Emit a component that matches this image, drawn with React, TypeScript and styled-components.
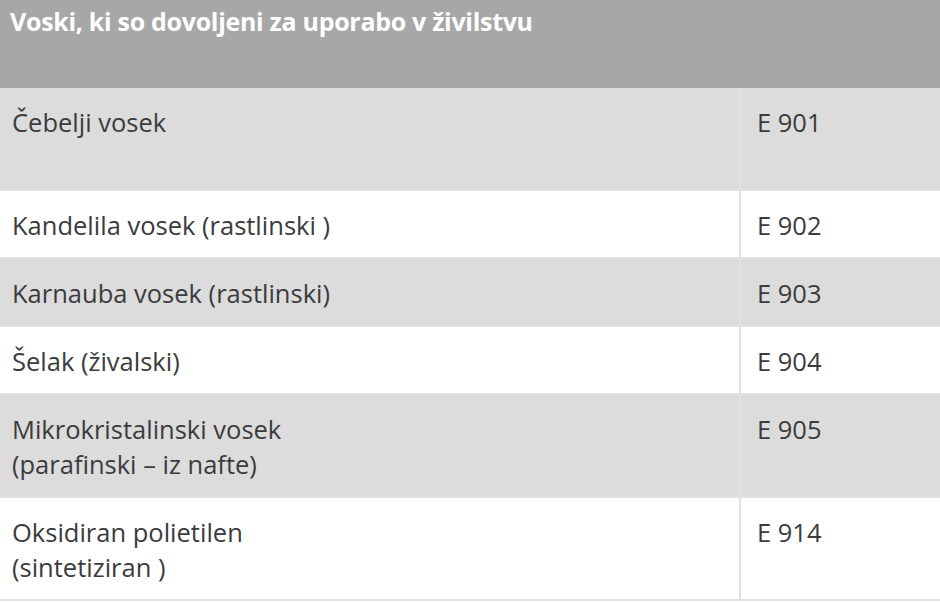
import styled, { createGlobalStyle } from "styled-components";

const GlobalStyle = createGlobalStyle`
  html, body {
    margin: 0;
    padding: 0;
    background: #ffffff;
  }
  body {
    font-family: "Open Sans", "Liberation Sans", sans-serif;
  }
`;

interface WaxRow {
  name: string[];
  code: string;
  tall?: boolean;
}

const rows: WaxRow[] = [
  { name: ["Čebelji vosek"], code: "E 901", tall: true },
  { name: ["Kandelila vosek (rastlinski )"], code: "E 902" },
  { name: ["Karnauba vosek (rastlinski)"], code: "E 903" },
  { name: ["Šelak (živalski)"], code: "E 904" },
  { name: ["Mikrokristalinski vosek", "(parafinski – iz nafte)"], code: "E 905" },
  { name: ["Oksidiran polietilen", "(sintetiziran )"], code: "E 914" },
];

const Table = styled.table`
  width: 940px;
  border-collapse: collapse;
  table-layout: fixed;
  color: #3b3b3e;
  font-size: 25.5px;
  line-height: 35px;
`;

const HeadCell = styled.th`
  height: 88px;
  box-sizing: border-box;
  padding: 4px 10px 0;
  vertical-align: top;
  text-align: left;
  background: #a7a7a7;
  color: #ffffff;
  font-weight: 700;
  font-size: 25px;
  letter-spacing: -0.3px;
`;

const Row = styled.tr<{ $shaded: boolean; $tall?: boolean }>`
  background: ${({ $shaded }) => ($shaded ? "#dcdcdc" : "#ffffff")};
  height: ${({ $tall }) => ($tall ? "102px" : "auto")};
  border-bottom: 2px solid #e2e2e2;
`;

const NameCell = styled.td`
  width: 740px;
  box-sizing: border-box;
  padding: 17px 12px 14px;
  vertical-align: top;
  border-right: 2px solid #e2e2e2;
`;

const CodeCell = styled.td`
  padding: 17px 16px 14px;
  vertical-align: top;
`;

export default function App() {
  return (
    <>
      <GlobalStyle />
      <Table>
        <colgroup>
          <col style={{ width: 740 }} />
          <col />
        </colgroup>
        <thead>
          <tr>
            <HeadCell colSpan={2}>Voski, ki so dovoljeni za uporabo v živilstvu</HeadCell>
          </tr>
        </thead>
        <tbody>
          {rows.map((row, i) => (
            <Row key={row.code} $shaded={i % 2 === 0} $tall={row.tall}>
              <NameCell>
                {row.name.map((line, j) => (
                  <div key={j}>{line}</div>
                ))}
              </NameCell>
              <CodeCell>{row.code}</CodeCell>
            </Row>
          ))}
        </tbody>
      </Table>
    </>
  );
}
